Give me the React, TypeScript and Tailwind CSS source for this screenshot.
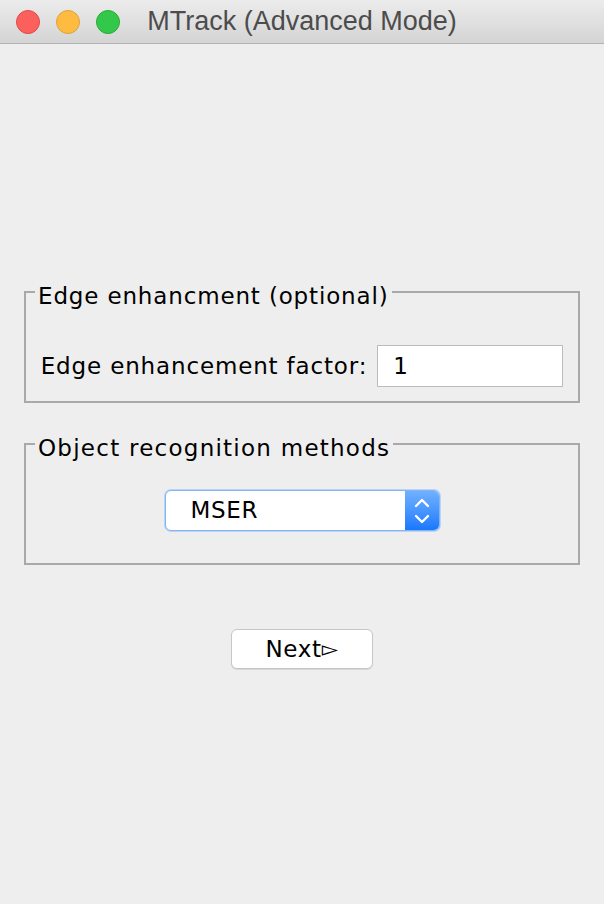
const ui = { fontFamily: '"DejaVu Sans", "Liberation Sans", sans-serif' };

function TitleBar() {
  return (
    <div className="relative h-[44px] flex items-center justify-center bg-gradient-to-b from-[#ececec] to-[#d4d4d4] border-b border-[#b3b3b3]">
      <div className="absolute left-[16px] top-[10px] flex gap-[16px]">
        <span className="w-[24px] h-[24px] rounded-full bg-[#fc605c] border border-[#de4a46]" />
        <span className="w-[24px] h-[24px] rounded-full bg-[#fdbc40] border border-[#dea236]" />
        <span className="w-[24px] h-[24px] rounded-full bg-[#34c84a] border border-[#27aa35]" />
      </div>
      <span
        className="text-[27px] leading-none text-[#4c4c4c]"
        style={{ fontFamily: '"Liberation Sans", Arial, sans-serif' }}
      >
        MTrack (Advanced Mode)
      </span>
    </div>
  );
}

function Group({
  title,
  tracking,
  children,
  className,
}: {
  title: string;
  tracking: string;
  children: React.ReactNode;
  className?: string;
}) {
  return (
    <fieldset className={`border-2 border-[#a9a9a9] px-[9px] ${className ?? ''}`}>
      <legend className={`px-[3px] pt-[8px] text-[23px] leading-[26px] text-black ${tracking}`}>{title}</legend>
      {children}
    </fieldset>
  );
}

export default function App() {
  return (
    <div className="w-full h-[904px] bg-[#eeeeee] flex flex-col" style={ui}>
      <TitleBar />
      <div className="flex flex-col px-[24px] pt-[231px]">
        <Group title="Edge enhancment (optional)" tracking="tracking-[0.85px]" className="pt-[36px] pb-[14px]">
          <div className="flex items-center justify-center gap-[10px]">
            <span className="text-[23px] leading-none tracking-[0.85px] text-black">Edge enhancement factor:</span>
            <div className="w-[186px] h-[42px] bg-white border border-[#bcbcbc] flex items-center pl-[15px] text-[23px] text-black">
              1
            </div>
          </div>
        </Group>

        <Group title="Object recognition methods" tracking="tracking-[1.25px]" className="mt-[24px] pt-[29px] pb-[32px]">
          <div className="flex justify-center">
            <div className="w-[275px] h-[41px] flex rounded-[6px] border border-[#86b4f0] shadow-[0_0_0_1px_#b9d4f7] bg-white overflow-hidden">
              <div className="flex-1 flex items-center pl-[25px] text-[23px] tracking-[0.7px] text-black">MSER</div>
              <div className="w-[34px] bg-gradient-to-b from-[#6fb1ff] to-[#1878fd] flex items-center justify-center">
                <svg width="16" height="26" viewBox="0 0 16 26" fill="none" stroke="#fff" strokeWidth="2.4" strokeLinecap="round" strokeLinejoin="round">
                  <path d="M2 8 L8 2 L14 8" />
                  <path d="M2 18 L8 24 L14 18" />
                </svg>
              </div>
            </div>
          </div>
        </Group>

        <button className="self-center mt-[64px] w-[142px] h-[40px] bg-white border border-[#c6c6c6] rounded-[6px] shadow-[0_1px_0_#d6d6d6] flex items-center justify-center text-[23px] tracking-[0.7px] text-black">
          Next<span className="text-[21px] leading-none">▻</span>
        </button>
      </div>
    </div>
  );
}
